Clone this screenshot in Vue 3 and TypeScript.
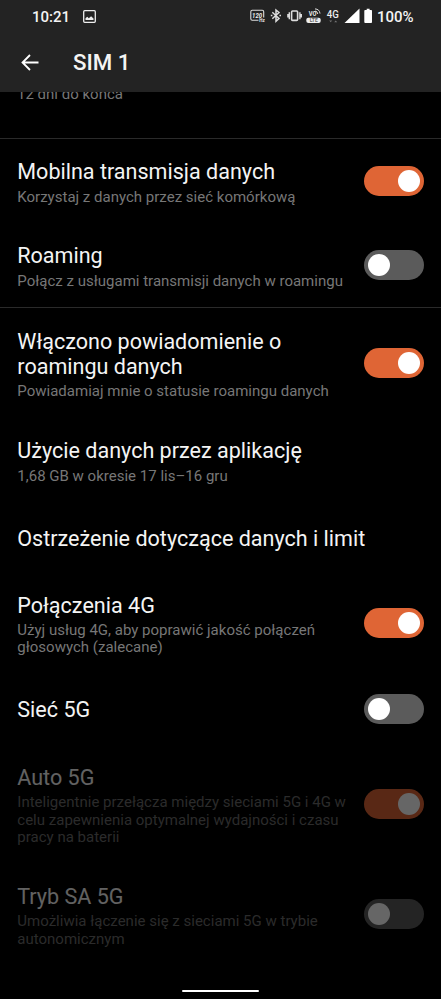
<script setup lang="ts">
import { ref } from 'vue'

interface Setting {
  title: string
  lines?: string[]
  on?: boolean
  disabled?: boolean
  divider?: boolean
  size: string
}

const settings = ref<Setting[]>([
  { title: 'Mobilna transmisja danych', lines: ['Korzystaj z danych przez sieć komórkową'], on: true, size: 'one' },
  { title: 'Roaming', lines: ['Połącz z usługami transmisji danych w roamingu'], on: false, divider: true, size: 'one' },
  { title: 'Włączono powiadomienie o roamingu danych', lines: ['Powiadamiaj mnie o statusie roamingu danych'], on: true, size: 'tall' },
  { title: 'Użycie danych przez aplikację', lines: ['1,68 GB w okresie 17 lis–16 gru'], size: 'one' },
  { title: 'Ostrzeżenie dotyczące danych i limit', size: 'bare' },
  { title: 'Połączenia 4G', lines: ['Użyj usług 4G, aby poprawić jakość połączeń', 'głosowych (zalecane)'], on: true, size: 'two' },
  { title: 'Sieć 5G', on: false, size: 'bare' },
  { title: 'Auto 5G', lines: ['Inteligentnie przełącza między sieciami 5G i 4G w', 'celu zapewnienia optymalnej wydajności i czasu', 'pracy na baterii'], on: true, disabled: true, size: 'three' },
  { title: 'Tryb SA 5G', lines: ['Umożliwia łączenie się z sieciami 5G w trybie', 'autonomicznym'], on: false, disabled: true, size: 'two' },
])

function toggle(s: Setting) {
  if (s.on !== undefined && !s.disabled) s.on = !s.on
}
</script>

<template>
  <div class="screen">
    <header>
      <div class="status">
        <span class="clock">10:21</span>
        <svg class="picture" width="13" height="13" viewBox="0 0 13 13">
          <rect x=".7" y=".7" width="11.6" height="11.6" rx="1" fill="none" stroke="#eee" stroke-width="1.3" />
          <path d="M2.5 10V8.2L4.3 6.8 5.8 8.2 8.1 6.3 10.5 8.5V10Z" fill="#eee" />
        </svg>
        <svg class="indicators" width="129" height="20" viewBox="0 0 129 20">
          <g fill="none" stroke="#ddd">
            <path d="M8.5 14.2H2.2Q.8 14.2.8 12.8V5.7Q.8 4.3 2.2 4.3H12.3Q13.7 4.3 13.7 5.7V11.5" stroke-width="1.1" />
            <path d="M22.3 6.3 29 12.4 26 15.2V4L29 6.5 22.3 12.8" stroke-width="1.5" />
            <path d="M20.8 9.5H22.4M29.4 9.5H31" stroke-width="1.6" />
            <rect x="41.6" y="5" width="6" height="9.4" rx="1" stroke-width="1.6" />
            <path d="M39.3 6.2V13.2M49.9 6.2V13.2M37.9 8V11.4M51.3 8V11.4" stroke-width="1.4" />
            <path d="M65 5Q67.5 5.2 67.8 8M65 2.9Q69.5 3.1 70 7.6" stroke-width="1" />
          </g>
          <g fill="#eee">
            <text x="2.1" y="12.2" class="hz" textLength="10" lengthAdjust="spacingAndGlyphs">120</text>
            <text x="9.3" y="16.4" class="unit">Hz</text>
            <text x="58.8" y="10" class="vo" textLength="7.6" lengthAdjust="spacingAndGlyphs">VO</text>
            <rect x="56.3" y="11.7" width="14.4" height="5.4" rx="2" />
            <text x="59.7" y="16.2" class="lte" textLength="8" lengthAdjust="spacingAndGlyphs">LTE</text>
            <text x="76.7" y="11.5" class="network" textLength="12" lengthAdjust="spacingAndGlyphs">4G</text>
            <path d="M79.2 14.5H82.2L80.7 16.3ZM84.2 16.3H87.2L85.7 14.5Z" opacity=".4" />
            <path d="M109.5 2.6V17H94.5Z" fill="#fff" />
            <path d="M115.2 4H116.7V2.7H119.6V4H121.2Q122 4 122 4.8V16Q122 17 121.2 17H115.2Q114.3 17 114.3 16V4.8Q114.3 4 115.2 4Z" fill="#fff" />
          </g>
        </svg>
        <span class="percent">100%</span>
      </div>
      <div class="bar">
        <svg width="18" height="17" viewBox="0 0 18 17" fill="none" stroke="#fff" stroke-width="1.8" stroke-linejoin="miter">
          <path d="M17.5 8.5H1.8M9 1 1.5 8.5 9 16" />
        </svg>
        <h1>SIM 1</h1>
      </div>
    </header>
    <main>
      <section class="plan"><p>12 dni do końca</p></section>
      <section
        v-for="s in settings"
        :key="s.title"
        class="row"
        :class="[s.size, { divider: s.divider, disabled: s.disabled }]"
        @click="toggle(s)"
      >
        <div class="copy">
          <h2>{{ s.title }}</h2>
          <p v-if="s.lines"><span v-for="line in s.lines" :key="line">{{ line }}</span></p>
        </div>
        <div v-if="s.on !== undefined" class="switch" :class="{ on: s.on }" role="switch" :aria-checked="s.on"><i></i></div>
      </section>
    </main>
    <footer><div class="handle"></div></footer>
  </div>
</template>

<style>
body { background: #000; }
</style>

<style scoped>
.screen { width: 441px; height: 999px; overflow: hidden; background: #000; color: #f4f4f4; font-family: Roboto, sans-serif; display: flex; flex-direction: column; }
header { height: 92px; background: #232323; flex: none; }
.status { height: 32px; display: flex; align-items: center; padding-left: 32px; }
.clock { width: 51px; font-size: 15px; line-height: 20px; font-weight: 500; color: #f4f4f4; padding-top: 1px; box-sizing: border-box; }
.indicators { margin-left: 153.7px; }
.percent { font-size: 15px; font-weight: 500; line-height: 20px; margin-left: -1.7px; padding-top: 1px; }
.hz { font: italic 700 8px Roboto, sans-serif; }
.unit { font: 700 4.5px Roboto, sans-serif; }
.vo { font: 700 6.5px Roboto, sans-serif; }
.lte { font: 700 5px Roboto, sans-serif; fill: #666; }
.network { font: 500 10px Roboto, sans-serif; }
.bar { height: 60px; display: flex; align-items: center; padding-left: 21px; }
h1 { margin: 0 0 0 34px; font-size: 22.3px; font-weight: 500; line-height: 28px; }
main { flex: 1; }
.plan { height: 46.5px; box-sizing: border-box; border-bottom: 1px solid #2a2a2a; overflow: hidden; padding-left: 17px; }
.plan p { margin-top: -6px; }
.row { box-sizing: border-box; display: flex; align-items: center; padding: 0 17px 0 17.3px; }
.one { height: 84.5px; }
.tall { height: 110px; }
.bare { height: 71px; }
.two { height: 100.5px; }
.three { height: 120px; }
.divider { border-bottom: 1px solid #2a2a2a; }
.copy { flex: 1; min-width: 0; padding-top: 4px; }
.bare .copy { padding-top: 1.5px; }
.two .copy, .three .copy { padding-top: 3px; }
h2 { margin: 0; max-width: 352px; font-size: 21.55px; line-height: 25.2px; font-weight: 400; white-space: nowrap; }
.tall h2 { width: 290px; white-space: normal; }
p { margin: 4px 0 0; font-size: 15.03px; line-height: 17.5px; color: #777; white-space: nowrap; }
p span { display: block; }
.switch { flex: none; width: 60px; height: 30px; border-radius: 15px; background: #5b5b5b; display: flex; align-items: center; padding: 0 4px; box-sizing: border-box; }
.two .switch, .three .switch { margin-top: -1px; }
.switch.on { background: #df6535; justify-content: flex-end; }
.switch i { width: 22px; height: 22px; border-radius: 50%; background: #fff; }
.disabled h2, .disabled .switch { opacity: .4; }
.disabled p { opacity: .36; }
footer { height: 9.5px; display: flex; justify-content: center; }
.handle { width: 77px; height: 2.6px; border-radius: 2px; background: #fff; }
</style>
